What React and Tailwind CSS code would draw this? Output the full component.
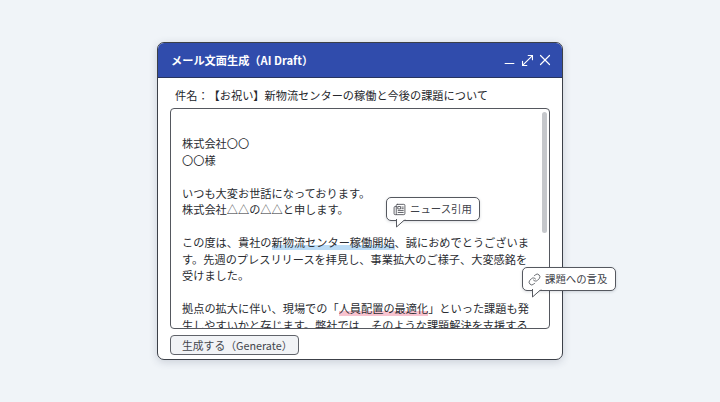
import { Minus, MoveDiagonal, X, Link } from "lucide-react";

const font = { fontFamily: '"Noto Sans CJK JP", "Noto Sans", sans-serif' };

// lucide's newspaper doesn't have the boxed photo + lines of the reference
const NewsIcon = ({ className }) => (
  <svg className={className} viewBox="0 0 24 24" fill="none" stroke="currentColor" strokeWidth="1.6" strokeLinecap="round" strokeLinejoin="round">
    <rect x="6" y="2.5" width="16" height="19" rx="2" />
    <path d="M6 6.5H4a2 2 0 0 0-2 2V19.5a2 2 0 0 0 2 2h3" />
    <rect x="9.5" y="6.5" width="4.5" height="4.5" />
    <path d="M16.5 7.5H19M16.5 10.5H19M9.5 14H19M9.5 17.5H19" />
  </svg>
);

const Callout = ({ icon: Icon, label, className, tail }) => (
  <div className={`absolute flex items-center bg-white border border-[#55585f] rounded-[5px] shadow-[0_1px_3px_rgba(40,50,70,0.18)] text-[#3e4148] text-[10.4px] ${className}`}>
    <Icon className="w-[13px] h-[13px] shrink-0 text-[#4a4d54]" strokeWidth={1.5} />
    <span className="ml-[4px] whitespace-nowrap">{label}</span>
    <svg className={`absolute top-full -mt-px w-[11px] h-[9px] ${tail}`} viewBox="0 0 11 9">
      <path d="M0.5 0 L0.5 8 L9.5 0" fill="#fff" stroke="#55585f" strokeWidth="1" />
      <path d="M1.2 0 H9" stroke="#fff" strokeWidth="1.4" />
    </svg>
  </div>
);

const App = () => {
  return (
    <div className="w-[720px] h-[402px] flex items-center justify-center bg-[#f0f4f8] overflow-hidden relative [text-spacing-trim:space-all]" style={font}>
      <div className="w-[406px] h-[318px] bg-white border border-[#3c4048] rounded-[7px] shadow-[0_2px_8px_rgba(50,60,90,0.2)] flex flex-col relative">
        {/* Title bar */}
        <div className="h-[35px] shrink-0 bg-[#304cac] rounded-t-[6px] border-b border-[#27345f] flex items-center pl-[13px] pr-[8px] text-white">
          <h1 className="text-[11.2px] font-bold flex-1">メール文面生成（AI Draft）</h1>
          <Minus className="w-[15px] h-[15px] mt-[6px]" strokeWidth={1.8} />
          <MoveDiagonal className="w-[17px] h-[17px] ml-[2px]" strokeWidth={1.6} />
          <X className="w-[18px] h-[18px]" strokeWidth={1.6} />
        </div>

        {/* Subject */}
        <p className="pl-[17px] pt-[9px] h-[30px] shrink-0 text-[11.2px] leading-[17px] text-[#25272c]">
          件名：【お祝い】新物流センターの稼働と今後の課題について
        </p>

        {/* Body */}
        <div className="mx-3 h-[221px] shrink-0 border border-[#55585f] rounded-[4px] relative overflow-hidden px-[11px] pt-[26px] text-[11.2px] leading-[16.5px] text-[#2a2c31]">
          <p>株式会社〇〇</p>
          <p>〇〇様</p>
          <p className="mt-[16.5px]">いつも大変お世話になっております。</p>
          <p>株式会社△△の△△と申します。</p>
          <p className="mt-[16.5px] w-[350px]">
            この度は、貴社の<span className="bg-[linear-gradient(transparent_68%,#bcdcf6_68%)]">新物流センター稼働開始</span>、誠におめでとうございます。先週のプレスリリースを拝見し、事業拡大のご様子、大変感銘を受けました。
          </p>
          <p className="mt-[16.5px] w-[350px]">
            拠点の拡大に伴い、現場での「<span className="bg-[linear-gradient(transparent_68%,#f8c3cf_68%)]">人員配置の最適化</span>」といった課題も発生しやすいかと存じます。弊社では、そのような課題解決を支援する
          </p>
          <div className="absolute top-[3px] right-[2px] w-[5px] h-[121px] rounded-full bg-[#c5c7cb]" />
        </div>

        {/* Footer */}
        <div className="pl-3 pt-[6px]">
          <button className="w-[129px] h-[20px] flex items-center pl-[11px] border border-[#5f6269] rounded-[4px] bg-[#f1f3f6] text-[10.8px] text-[#43464d]">
            生成する（Generate）
          </button>
        </div>

        <Callout icon={NewsIcon} label="ニュース引用" className="left-[228px] top-[154px] w-[94px] h-[24px] pl-[6px]" tail="left-[9px]" />
        <Callout icon={Link} label="課題への言及" className="left-[364px] top-[224px] w-[94px] h-[24px] pl-[5px]" tail="left-[9px]" />
      </div>
    </div>
  );
};

export default App;
